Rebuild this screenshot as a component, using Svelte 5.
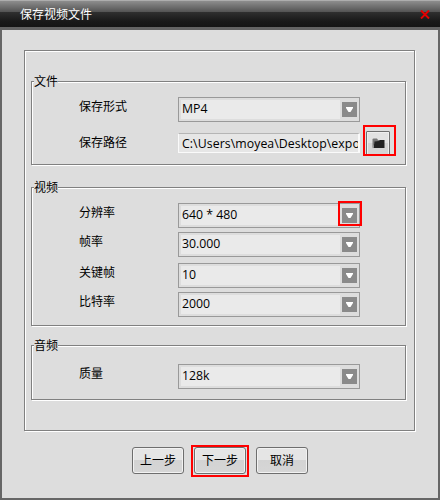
<script lang="ts">
    type Field = { label: string; value: string; marked?: boolean; spaced?: boolean };

    const format: Field[] = [{ label: '保存形式', value: 'MP4' }];

    const video: Field[] = [
        { label: '分辨率', value: '640 * 480', marked: true },
        { label: '帧率', value: '30.000' },
        { label: '关键帧', value: '10', spaced: true },
        { label: '比特率', value: '2000' }
    ];

    const audio: Field[] = [{ label: '质量', value: '128k' }];

    let path = 'C:\\Users\\moyea\\Desktop\\expo';
</script>

{#snippet fields(list: Field[])}
    {#each list as field}
        <div class="row" class:spaced={field.spaced}>
            <span class="label">{field.label}</span>
            <div class="select">
                <span class="value">{field.value}</span>
                <span class="arrow">
                    <svg width="7" height="5" viewBox="0 0 7 5"><path d="M0 0h7v1L4.5 5h-2L0 1z" fill="#fff" /></svg>
                </span>
                {#if field.marked}
                    <span class="mark mark-arrow"></span>
                {/if}
            </div>
        </div>
    {/each}
{/snippet}

<div class="dialog">
    <header class="titlebar">
        <span class="title">保存视频文件</span>
        <svg class="close" width="10" height="9" viewBox="0 0 10 9">
            <path d="M1 .5L9 8.5M9 .5L1 8.5" stroke="#e60000" stroke-width="1.9" />
        </svg>
    </header>

    <main class="content">
        <div class="panel">
            <section class="group file">
                <h2>文件</h2>
                {@render fields(format)}
                <div class="row path-row">
                    <span class="label">保存路径</span>
                    <div class="path">{path}</div>
                    <div class="browse-wrap">
                        <button class="browse" aria-label="保存路径">
                            <svg width="13" height="11" viewBox="0 0 13 11">
                                <path d="M.5 10.500V1L1.500 .5h3.500l1 1.500h6V4H3z" fill="#777" />
                                <path d="M2.500 3.500L7 3l1-1h4.500v8H1.500z" fill="#222" />
                            </svg>
                        </button>
                        <span class="mark mark-browse"></span>
                    </div>
                </div>
            </section>

            <section class="group video">
                <h2>视频</h2>
                {@render fields(video)}
            </section>

            <section class="group audio">
                <h2>音频</h2>
                {@render fields(audio)}
            </section>
        </div>

        <footer class="actions">
            <button class="btn">上一步</button>
            <button class="btn">下一步<span class="mark mark-next"></span></button>
            <button class="btn">取消</button>
        </footer>
    </main>
</div>

<style>
    :global(body) {
        background: #ddd;
    }

    .dialog,
    .dialog * {
        box-sizing: border-box;
    }

    .dialog {
        width: 440px;
        height: 500px;
        display: flex;
        flex-direction: column;
        background: #ddd;
        color: #000;
        font: 12px/16px 'Noto Sans CJK SC', sans-serif;
        overflow: hidden;
    }

    .titlebar {
        height: 30px;
        flex: none;
        display: flex;
        justify-content: space-between;
        padding: 6px 10px 0 20px;
        border-top: 1px solid #adadad;
        border-bottom: 3px solid #636363;
        background: linear-gradient(#8d8d8d 0, #535353 11px, #303030 11px, #191919 20px, #141414 26px);
        color: #fff;
    }

    .title {
        height: 16px;
        line-height: 13px;
    }

    .close {
        margin-top: 3px;
    }

    .content {
        flex: 1;
        border: 2px solid #666;
        border-top: 0;
        padding: 20px 23px 0 22px;
    }

    .panel,
    .group {
        border: 1px solid #808080;
        box-shadow: 1px 1px 0 #fff, inset 1px 1px 0 #fff;
    }

    .panel {
        width: 391px;
        height: 381px;
        padding: 30px 8px 0 6px;
    }

    .group {
        width: 375px;
        padding-left: 47px;
    }

    .file {
        height: 84px;
    }

    .video {
        height: 139px;
        margin-top: 22px;
    }

    .audio {
        height: 55px;
        margin-top: 19px;
    }

    /* legend sits on the top edge of its group */
    .group h2 {
        width: 24px;
        height: 15px;
        margin: -8px 0 8px -45px;
        background: #ddd;
        font-size: 12px;
        font-weight: normal;
        line-height: 13px;
    }

    .audio h2 {
        margin-bottom: 11px;
    }

    .row {
        display: flex;
        height: 25px;
        margin-bottom: 4px;
    }

    .row.spaced {
        margin-top: 6px;
    }

    .label {
        width: 99px;
        line-height: 17px;
    }

    .select {
        position: relative;
        width: 182px;
        height: 25px;
        display: flex;
        align-items: center;
        justify-content: space-between;
        padding: 0 2px;
        border: 1px solid #999;
        background: #ddd;
    }

    .value,
    .path {
        font-family: 'Open Sans', 'Noto Sans', sans-serif;
        font-size: 12.3px;
        white-space: nowrap;
        overflow: hidden;
    }

    .value {
        width: 159px;
        height: 19px;
        padding-left: 1px;
        background: #eaeaea;
        line-height: 17px;
    }

    .arrow {
        width: 15px;
        height: 15px;
        display: flex;
        align-items: center;
        justify-content: center;
        background: #8a8a8a;
    }

    .path-row {
        height: 20px;
        margin-top: 11px;
    }

    .path {
        width: 182px;
        height: 20px;
        padding-left: 3px;
        border: 1px solid #fafafa;
        border-top-color: #b5b5b5;
        border-right-width: 2px;
        background: #e6e6e6;
        letter-spacing: 0.07px;
        line-height: 19px;
    }

    .browse-wrap {
        position: relative;
        width: 24px;
        height: 24px;
        margin: -2px 0 0 6px;
    }

    .browse {
        width: 24px;
        height: 25px;
        display: flex;
        align-items: center;
        justify-content: center;
        padding: 0;
        border: 1px solid #6e6e6e;
        border-radius: 1px;
        box-shadow: inset 0 0 0 1px #eee;
        background: linear-gradient(#e2e2e2 50%, #d5d5d5 50%);
    }

    .mark {
        position: absolute;
        border: 2px solid #f00;
        pointer-events: none;
    }

    .mark-arrow {
        top: -3px;
        right: -3px;
        width: 24px;
        height: 25px;
    }

    .mark-browse {
        top: -6px;
        left: -3px;
        width: 33px;
        height: 31px;
    }

    .mark-next {
        top: -3px;
        left: -4px;
        width: 58px;
        height: 32px;
    }

    .actions {
        display: flex;
        gap: 10px;
        padding: 16px 0 0 108px;
    }

    .btn {
        position: relative;
        width: 52px;
        height: 27px;
        padding: 0 0 1px;
        border: 1px solid #6e6e6e;
        border-radius: 3px;
        box-shadow: inset 0 0 0 1px #f2f2f2;
        background: linear-gradient(#e5e5e5 49%, #d3d3d3 49%, #d6d6d6);
        color: #000;
        font: 12px/16px 'Noto Sans CJK SC', sans-serif;
    }
</style>
